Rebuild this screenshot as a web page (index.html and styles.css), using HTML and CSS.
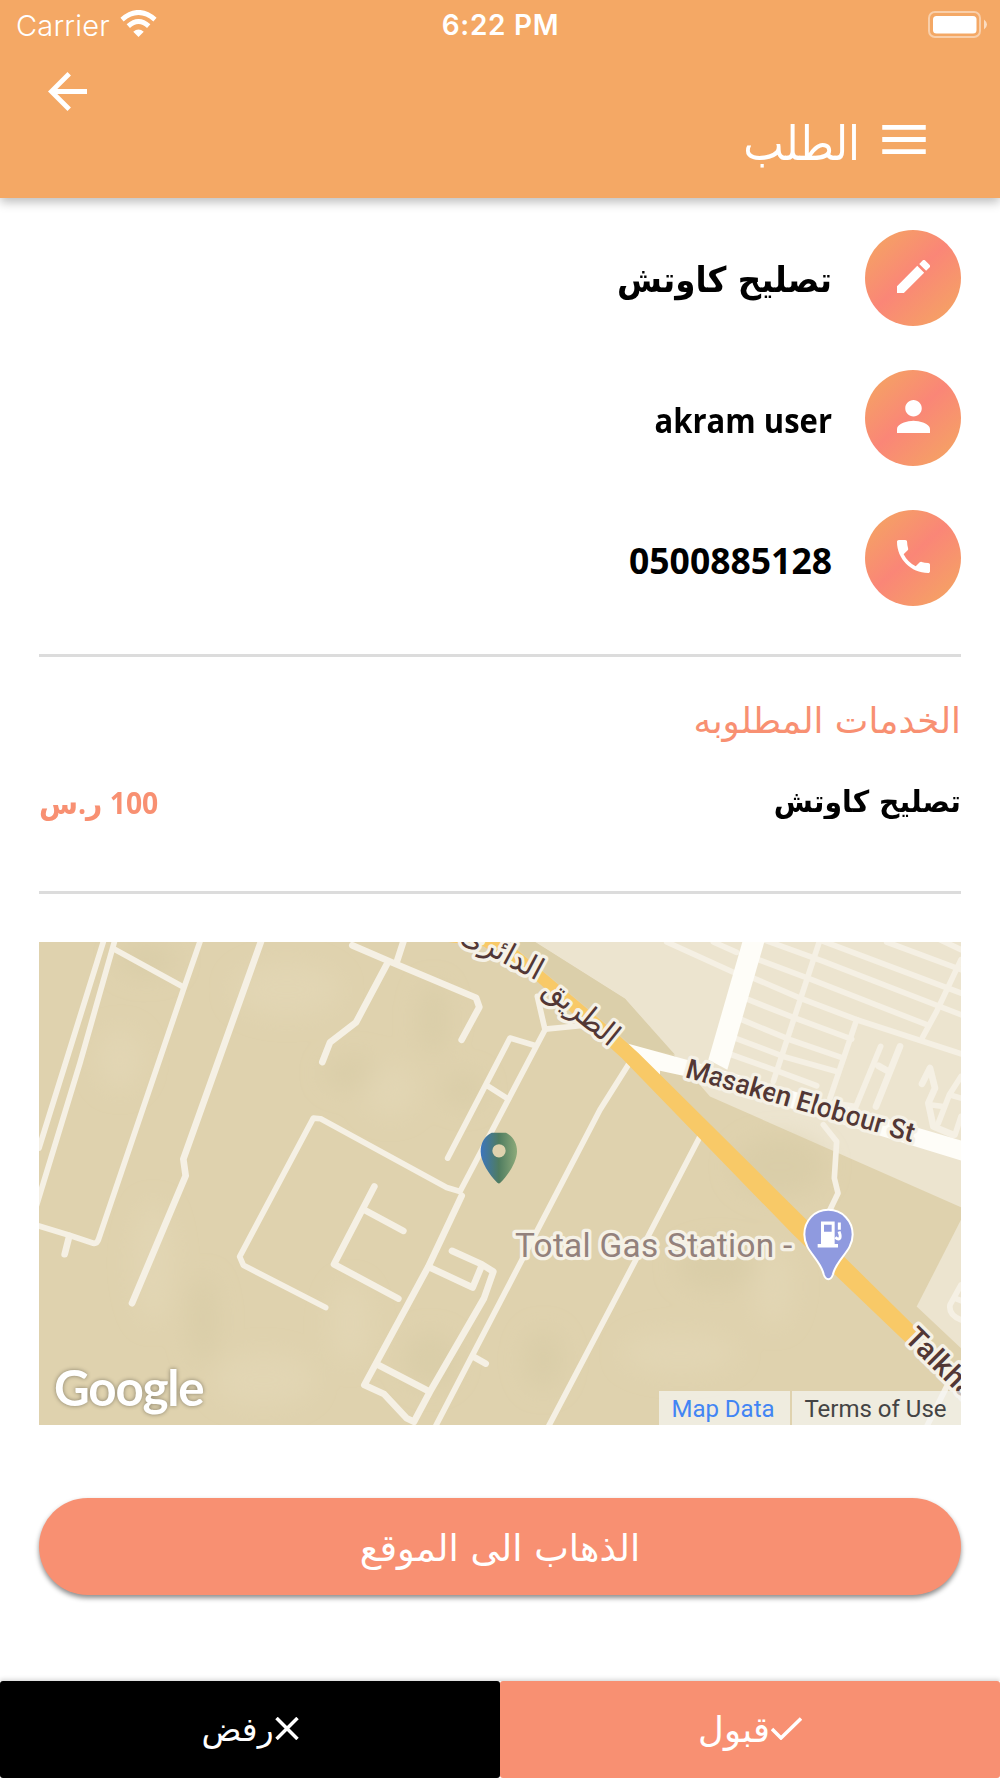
FILE: index.html
```
<!DOCTYPE html>
<html lang="ar" dir="rtl">
<head>
  <meta charset="UTF-8" />
  <meta name="viewport" content="width=device-width, initial-scale=1.0" />
  <title>الطلب</title>
  <link rel="stylesheet" href="styles.css">
</head>
<body>
  <!-- Header -->
  <header class="header">
    <div class="status-bar" dir="ltr">
      <div class="status-left">
        <span class="carrier">Carrier</span>
        <svg class="wifi" viewBox="0 0 110 82">
          <path d="M55 82 L39 66 Q55 52 71 66 Z" fill="#fff" />
          <path d="M24 49 Q55 21 86 49" fill="none" stroke="#fff" stroke-width="15" />
          <path d="M5 29 Q55 -14 105 29" fill="none" stroke="#fff" stroke-width="15" />
        </svg>
      </div>
      <span class="clock">6:22 PM</span>
      <div class="status-right">
        <svg class="battery" viewBox="0 0 60 28">
          <rect x="1" y="1" width="51" height="25" rx="6" fill="none" stroke="#fff" stroke-opacity=".45" stroke-width="2" />
          <rect x="5" y="5" width="43.500" height="17.500" rx="3.500" fill="#fff" />
          <path d="M56 8.500 Q59 11 59 13.500 Q59 16 56 18.500 Z" fill="#fff" fill-opacity=".6" />
        </svg>
      </div>
    </div>
    <div class="back-row" dir="ltr">
      <svg class="back" viewBox="4 4 16 16"><path fill="#fff" d="M20 11H7.830l5.590-5.590L12 4l-8 8 8 8 1.410-1.410L7.830 13H20v-2z" /></svg>
    </div>
    <div class="title-row">
      <svg class="menu" viewBox="0 0 18 12"><path fill="#fff" d="M0 12h18v-2H0v2zm0-5h18V5H0v2zm0-7v2h18V0H0z" /></svg>
      <h1>الطلب</h1>
    </div>
  </header>

  <main class="content">
    <ul class="info">
      <li>
        <span class="circle"><svg viewBox="3 3 18 18"><path d="M3 17.250V21h3.750L17.810 9.940l-3.750-3.750L3 17.250zM20.710 7.040a1 1 0 0 0 0-1.410l-2.340-2.340a1 1 0 0 0-1.410 0l-1.830 1.830 3.750 3.750 1.830-1.830z" /></svg></span>
        <span class="label">تصليح كاوتش</span>
      </li>
      <li>
        <span class="circle"><svg viewBox="4 4 16 16"><path d="M12 12c2.210 0 4-1.790 4-4s-1.790-4-4-4-4 1.790-4 4 1.790 4 4 4zm0 2c-2.670 0-8 1.340-8 4v2h16v-2c0-2.660-5.330-4-8-4z" /></svg></span>
        <span class="label label-user">akram user</span>
      </li>
      <li>
        <span class="circle"><svg viewBox="3 3 18 18"><path d="M6.620 10.790a15.150 15.150 0 0 0 6.590 6.590l2.200-2.200c.27-.27.67-.36 1.020-.24 1.120.37 2.330.57 3.570.57.550 0 1 .450 1 1V20c0 .550-.450 1-1 1C10.610 21 3 13.390 3 4c0-.550.450-1 1-1h3.500c.550 0 1 .450 1 1 0 1.250.2 2.450.57 3.570.11.350.03.740-.25 1.020l-2.200 2.200z" /></svg></span>
        <span class="label label-phone">0500885128</span>
      </li>
    </ul>

    <section class="services">
      <h2>الخدمات المطلوبه</h2>
      <div class="service">
        <span class="service-name">تصليح كاوتش</span>
        <span class="price">100 ر.س</span>
      </div>
    </section>

    <!-- Map -->
    <div class="map" dir="ltr">
      <svg class="map-canvas" viewBox="27 37 2766 1448" preserveAspectRatio="none">
        <defs>
          <linearGradient id="pin">
            <stop offset="0" stop-color="#3b75bd" />
            <stop offset=".5" stop-color="#4f7c60" />
            <stop offset="1" stop-color="#8daa7a" />
          </linearGradient>
          <filter id="soft" x="-50%" y="-50%" width="200%" height="200%"><feGaussianBlur stdDeviation="35" /></filter>
        </defs>
        <rect x="27" y="37" width="2766" height="1448" fill="#dfd2ae" />

        <!-- Built-up areas -->
        <g fill="#ece4cf">
          <path d="M1515 37 L1785 207 L2040 500 L2793 832 L2793 37 Z" />
          <path d="M2793 870 L2660 1130 L2793 1255 Z" />
        </g>
        <path d="M1515 37 L1785 207 L1935 375 L1810 350 L1500 90 L1440 37 Z" fill="#dbcfaa" />

        <!-- Terrain shading -->
        <g filter="url(#soft)">
          <g fill="#d6c9a4" opacity=".5">
            <ellipse cx="1210" cy="270" rx="45" ry="110" />
            <ellipse cx="1300" cy="480" rx="60" ry="50" />
            <ellipse cx="970" cy="430" rx="90" ry="50" />
            <ellipse cx="520" cy="1170" rx="45" ry="130" />
            <ellipse cx="1200" cy="1290" rx="80" ry="80" />
            <ellipse cx="350" cy="90" rx="90" ry="50" />
            <ellipse cx="2250" cy="710" rx="140" ry="90" />
            <ellipse cx="2060" cy="1010" rx="120" ry="70" />
            <ellipse cx="1540" cy="1290" rx="60" ry="90" />
          </g>
          <g fill="#e5dab9" opacity=".5">
            <ellipse cx="770" cy="180" rx="160" ry="80" />
            <ellipse cx="270" cy="390" rx="70" ry="90" />
            <ellipse cx="1080" cy="480" rx="80" ry="80" />
            <ellipse cx="370" cy="1000" rx="60" ry="180" />
            <ellipse cx="700" cy="1350" rx="150" ry="80" />
            <ellipse cx="960" cy="1180" rx="60" ry="120" />
            <ellipse cx="2230" cy="1070" rx="60" ry="120" />
            <ellipse cx="1950" cy="1270" rx="170" ry="60" />
          </g>
        </g>

        <!-- Small roads, west side -->
        <g class="road">
          <path d="M222 30 L27 655" />
          <path d="M255 30 L150 400 L20 825" />
          <path d="M252 58 L460 172" />
          <path d="M512 30 L460 180 L205 930 Q200 942 190 940 L118 916 L20 886" />
          <path class="w20" d="M118 918 L104 973" />
          <path class="w20" d="M695 30 L460 688 L467 738 L306 1120" />
          <path class="w20" d="M967 47 L1090 100 L1338 204 L1348 232 L1295 330" />
          <path class="w20" d="M1122 30 L1100 98" />
          <path class="w20" d="M1070 105 L978 278 L900 338 L877 397" />
          <path d="M887 1133 L640 1006 L629 980 L850 565 L872 567 L1250 773 L1290 785 L1545 300" />
          <path class="w20" d="M1033 770 L912 1003 L1105 1106" />
          <path class="w20" d="M1003 840 L1120 903" />
          <path d="M1253 685 L1440 325 L1515 347" />
          <path d="M1375 470 L1435 508" />
          <path class="w20" d="M1295 798 L1195 1010 L1003 1365 L1062 1392 L1130 1465 L1152 1475 L1200 1385 L1362 1105 L1390 1025 L1355 1003 L1266 963" />
          <path class="w20" d="M1198 1012 L1328 1073 L1355 1008" />
          <path class="w20" d="M1045 1305 L1195 1383" />
          <path d="M1215 1492 L1325 1280 L1710 540 L1795 405" />
          <path class="w20" d="M1330 1280 L1367 1301" />
          <path d="M1545 300 L1522 200 M1545 298 L1680 285" />
          <path d="M1555 1490 L1820 985 L2010 620" />
        </g>

        <!-- Streets, east side -->
        <g class="road" transform="translate(1380 0)">
          <path d="M530 37 L735 130 M670 37 L740 68" />
          <path d="M820 30 L1000 95 L1413 255" />
          <path d="M805 90 L965 150 L1310 285" />
          <path d="M990 30 L850 455" />
          <path d="M1000 35 L1413 190 M1190 37 L1413 120 M1350 30 L1413 60" />
          <path d="M790 145 L930 205 L1100 270 L1413 372" />
          <path d="M775 210 L915 265 L1085 328" />
          <path d="M755 270 L900 330 L1060 385" />
          <path d="M735 325 L880 380 L1040 425" />
          <path d="M725 375 L865 425 L980 468" />
          <path d="M1413 90 L1340 245 L1298 322" />
          <path d="M1100 270 L1020 505 M1172 350 L1098 530 M1030 520 L1098 530" />
          <path class="w20" d="M1230 350 L1158 530 M1165 408 L1195 425" />
          <path class="w20" d="M1296 462 L1320 415 L1335 475 L1315 520 L1330 590 L1390 615" />
          <path d="M1413 440 L1378 495 L1345 580 M1378 495 L1413 505 M1320 525 L1360 530" />
          <path d="M1413 560 L1395 615" />
          <path d="M1000 585 L1040 635 L1033 745 L1044 790 L1015 850" />
          <path d="M1413 1065 L1380 1125 Q1375 1155 1413 1170 M1395 1105 L1413 1112" />
          <path d="M1413 1300 L1370 1370 L1310 1490" />
        </g>

        <!-- Main streets -->
        <g transform="translate(1380 0)">
          <path d="M757 37 L823 37 L712 420 L655 390 Z" fill="#fefdf8" />
          <path d="M415 342 L590 390 L1413 632 L1413 692 L590 440 L510 423 L510 440 Z" fill="#fefdf8" />
          <path d="M-125 30 L45 30 L390 320 L445 370 L960 880 L1300 1215 L1260 1250 L910 915 L395 385 L130 145 L-20 50 L-125 37 Z" fill="#f8c967" />
          <g class="street-name">
            <text x="583" y="442" transform="rotate(16 583 442)" font-size="82" textLength="710">Masaken Elobour St</text>
            <text x="1240" y="1228" transform="rotate(45 1240 1228)" font-size="88">Talkha</text>
            <text class="ar" x="256" y="270" transform="rotate(39 256 270)" font-size="92" textLength="264" lengthAdjust="spacingAndGlyphs">الطريق</text>
            <text class="ar" x="24" y="92" transform="rotate(28 24 92)" font-size="92" textLength="262" lengthAdjust="spacingAndGlyphs">الدائرى</text>
          </g>
          <text class="poi-name" x="75" y="981" font-size="100" textLength="832">Total Gas Station -</text>
        </g>

        <!-- Gas station pin -->
        <g transform="translate(1380 0)">
          <path d="M1015 840 C972 840 943 874 943 914 C943 965 990 985 1001 1033 Q1006 1048 1015 1048 Q1024 1048 1029 1033 C1040 985 1088 965 1088 914 C1088 874 1058 840 1015 840 Z" fill="#8f9adf" stroke="#fff" stroke-width="6" />
          <path fill="#fff" fill-rule="evenodd" d="M993 875 H1034 V942 H1044 V953 H983 V942 H993 Z M1002 885 V906 H1025 V885 Z" />
          <path d="M1048 878 V900 M1047 905 C1056 928 1046 932 1036 922" fill="none" stroke="#fff" stroke-width="9" />
        </g>

        <!-- Location marker -->
        <path fill="url(#pin)" fill-rule="evenodd" d="M1385 609 H1428 C1450 620 1461 640 1461 665 C1461 695 1435 735 1411 759 Q1407 763 1402 759 C1378 735 1352 695 1352 665 C1352 640 1363 620 1385 609 Z M1407 643 A20 20 0 1 0 1407 683 A20 20 0 1 0 1407 643 Z" />

        <text class="google" x="72" y="1429" font-size="148" textLength="452">Google</text>
      </svg>
      <div class="attribution">
        <span class="map-data">Map Data</span>
        <span class="terms">Terms of Use</span>
      </div>
    </div>

    <button class="go-button"><span>الذهاب الى الموقع</span></button>
  </main>

  <!-- Bottom actions -->
  <footer class="actions">
    <button class="accept">
      <svg viewBox="0 0 31 23"><path d="M1 12 L10 21 L30 1.500" /></svg>
      <span>قبول</span>
    </button>
    <button class="reject">
      <svg viewBox="0 0 24 23"><path d="M1.500 1 L22.500 22 M22.500 1 L1.500 22" /></svg>
      <span>رفض</span>
    </button>
  </footer>
</body>
</html>
```
FILE: styles.css
```
:root {
  --header: #f4a865;
  --primary: #f89072;
  --line: #dcdcdc;
}

*, *::before, *::after {
  box-sizing: border-box;
}

body {
  margin: 0;
  width: 1000px;
  height: 1778px;
  display: flex;
  flex-direction: column;
  overflow: hidden;
  background: #fff;
  color: #000;
  font-family: "DejaVu Sans", sans-serif;
}

svg {
  display: block;
}

h1, h2, ul {
  margin: 0;
  padding: 0;
  font-weight: 400;
}

button {
  border: 0;
  padding: 0;
  color: #fff;
  background: var(--primary);
  font-family: inherit;
}

/* Header */
.header {
  height: 198px;
  background: var(--header);
  color: #fff;
  box-shadow: 0 4px 10px rgba(0, 0, 0, 0.27);
}

.status-bar {
  display: grid;
  grid-template-columns: 1fr auto 1fr;
  height: 50px;
  padding: 0 12px 0 16px;
  font-family: Inter, sans-serif;
  font-size: 28px;
  line-height: 51px;
}

.status-left {
  display: flex;
}

.carrier {
  width: 104px;
  font-size: 29px;
  font-weight: 300;
  letter-spacing: 0.2px;
}

.wifi {
  width: 37px;
  height: 27px;
  margin-top: 10px;
}

.clock {
  font-weight: 600;
  letter-spacing: 0.7px;
  margin-right: 3px;
}

.status-right {
  display: flex;
  justify-content: flex-end;
}

.battery {
  width: 60px;
  height: 28px;
  margin-top: 11px;
}

.back-row {
  padding: 22px 48px 0;
}

.back {
  width: 39px;
  height: 39px;
}

.title-row {
  display: flex;
  gap: 22px;
  padding-right: 74px;
}

.menu {
  width: 44px;
  height: 29px;
  margin-top: 14px;
}

.title-row h1 {
  font-size: 43px;
  line-height: 64px;
  transform: scaleY(1.1);
}

/* Order info */
.content {
  flex: 1;
  padding: 32px 39px 0;
}

.info {
  list-style: none;
  display: flex;
  flex-direction: column;
  gap: 44px;
  height: 427px;
  border-bottom: 3px solid var(--line);
}

.info li {
  display: flex;
  align-items: center;
  gap: 33px;
}

.circle {
  display: flex;
  align-items: center;
  justify-content: center;
  width: 96px;
  height: 96px;
  padding: 0 0 3px 1px;
  border-radius: 50%;
  background: linear-gradient(138deg, #f4a562 5%, #fa8677 48%, #f4a562 95%);
}

.circle svg {
  width: 33px;
  height: 33px;
  fill: #fff;
}

.label {
  padding-top: 4px;
  font-size: 32.5px;
  font-weight: 700;
  transform: scaleY(1.08);
}

.label-user {
  font-family: "Open Sans", sans-serif;
  font-size: 31px;
}

.label-phone {
  font-family: "Open Sans", sans-serif;
  font-size: 35.5px;
  transform: none;
}

/* Services */
.services {
  height: 237px;
  padding-top: 37px;
  border-bottom: 3px solid var(--line);
}

.services h2 {
  color: var(--primary);
  font-size: 35.7px;
  line-height: 54px;
}

.service {
  display: flex;
  justify-content: space-between;
  margin-top: 32px;
  font-size: 28.3px;
  font-weight: 700;
  line-height: 44px;
}

.service span {
  transform: scaleY(1.06);
}

.price {
  color: var(--primary);
  font-family: "Open Sans", "DejaVu Sans", sans-serif;
  letter-spacing: -0.4px;
}

/* Map */
.map {
  position: relative;
  height: 483px;
  margin-top: 48px;
  overflow: hidden;
}

.map-canvas {
  width: 100%;
  height: 100%;
}

.road path {
  fill: none;
  stroke: #f5f0e4;
  stroke-width: 17;
  stroke-linecap: round;
  stroke-linejoin: round;
}

.road .w20 {
  stroke-width: 20;
}

.street-name,
.poi-name {
  font-family: Roboto, sans-serif;
  stroke: #f5f1e6;
  stroke-width: 20;
  stroke-linejoin: round;
  paint-order: stroke;
}

.street-name {
  fill: #523735;
  font-weight: 500;
}

.street-name .ar {
  direction: rtl;
  text-anchor: middle;
  font-family: "DejaVu Sans", sans-serif;
}

.poi-name {
  fill: #93817c;
}

.google {
  fill: #fff;
  font-family: Lato, sans-serif;
  font-weight: 700;
  filter: drop-shadow(0 0 6px rgba(0, 0, 0, 0.4));
}

.attribution {
  position: absolute;
  right: 0;
  bottom: 0;
  display: flex;
  gap: 2px;
  font-family: Roboto, sans-serif;
  font-size: 24px;
  line-height: 37px;
}

.attribution span {
  height: 34px;
  text-align: center;
  background: rgba(245, 245, 242, 0.72);
}

.map-data {
  width: 131px;
  padding-right: 3px;
  color: #4285f4;
}

.terms {
  width: 169px;
  padding-right: 2px;
  color: #444;
}

.go-button {
  display: block;
  width: 100%;
  height: 97px;
  margin-top: 73px;
  padding-top: 3px;
  border-radius: 49px;
  font-size: 36.8px;
  box-shadow: 0 3px 5px rgba(0, 0, 0, 0.45);
}

/* Bottom actions */
.actions {
  display: flex;
  height: 97px;
  box-shadow: 0 -1px 5px rgba(0, 0, 0, 0.2);
}

.actions button {
  flex: 1;
  display: flex;
  align-items: center;
  justify-content: center;
  gap: 1px;
  border-radius: 3px;
  font-size: 35.5px;
}

.actions .reject {
  background: #000;
  font-size: 33px;
}

.actions svg {
  height: 23px;
  margin-bottom: 3px;
  fill: none;
  stroke: #fff;
  stroke-width: 3.5;
}
```
